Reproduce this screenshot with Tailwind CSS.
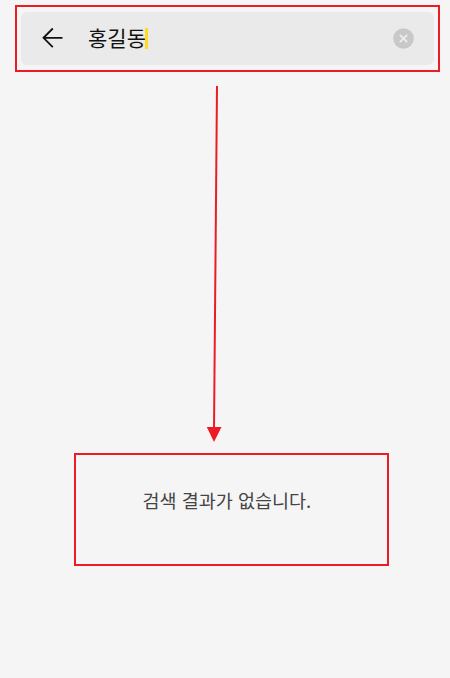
<!DOCTYPE html>
<html lang="ko">
<head>
    <meta charset="UTF-8">
    <meta name="viewport" content="width=device-width, initial-scale=1.0">
    <script src="https://cdn.jsdelivr.net/npm/@tailwindcss/browser@4"></script>
    <title>검색</title>
</head>
<body class="bg-[#f5f5f5] font-['Noto_Sans_CJK_KR',sans-serif]">
    <main class="flex flex-col w-[450px] h-[678px] pt-[5px] overflow-hidden">
        <!-- Barra de búsqueda -->
        <header class="ml-[15px] w-[425px] h-[67px] shrink-0 border-2 border-[#ed1c24] pt-[5px] px-1">
            <div class="flex items-center h-[53px] w-[413px] rounded-md bg-[#eaeaea] pl-[21px] pr-5">
                <svg class="w-[21px] h-[22px] mb-px shrink-0" viewBox="0 0 21 22" fill="none" stroke="#111111" stroke-width="1.8">
                    <path d="M10.8 1.5L1.5 10.8L10.8 20.2M1.5 10.8H20.5"/>
                </svg>
                <p class="ml-[25px] mb-1 text-[21px] leading-[30px] text-[#111111] whitespace-nowrap">홍길동</p>
                <span class="-ml-px w-[3px] h-[21px] bg-[#ffdc1e]"></span>
                <svg class="ml-auto w-[21px] h-[21px]" viewBox="0 0 21 21" fill="none">
                    <circle cx="10.5" cy="10.5" r="10.3" fill="#c8c8c8"/>
                    <path d="M6.8 6.8L14.2 14.2M14.2 6.8L6.8 14.2" stroke="#eeeeee" stroke-width="1.7"/>
                </svg>
            </div>
        </header>

        <!-- Flecha hacia el resultado -->
        <svg class="mt-[14px] ml-[206px] w-4 h-[356px] shrink-0" viewBox="0 0 16 356">
            <path d="M11 0L8 344" stroke="#ed1c24" stroke-width="2"/>
            <path d="M0.8 341H15.5L8 356Z" fill="#ed1c24"/>
        </svg>

        <!-- Resultado vacío -->
        <section class="mt-[11px] ml-[74px] w-[315px] h-[113px] shrink-0 border-2 border-[#ed1c24] pt-8 pl-[66.5px]">
            <p class="text-[18.5px] leading-[26px] text-[#444444] whitespace-nowrap">검색 결과가 없습니다.</p>
        </section>
    </main>
</body>
</html>
